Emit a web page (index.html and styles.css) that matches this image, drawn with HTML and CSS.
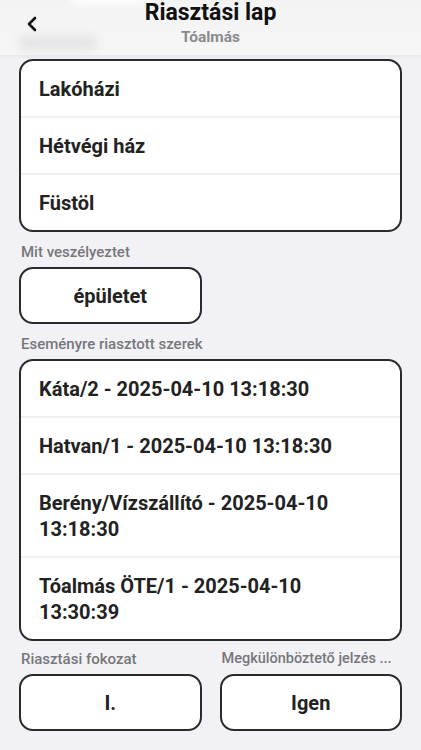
FILE: index.html
```html
<!DOCTYPE html>
<html lang="hu">

<head>
    <meta charset="UTF-8">
    <meta name="viewport" content="width=device-width, initial-scale=1.0">
    <title>Riasztási lap</title>
    <link rel="stylesheet" href="styles.css">
</head>

<body>
    <div class="header">
        <span class="blob blob-top"></span>
        <span class="blob blob-left"></span>
        <button class="back" aria-label="Vissza">
            <svg width="14" height="16" viewBox="0 0 14 16">
                <path d="M9 2 L3 8 L9 14" fill="none" stroke="#111" stroke-width="2.6" stroke-linecap="round" stroke-linejoin="round" />
            </svg>
        </button>
        <h1>Riasztási lap</h1>
        <p class="sub">Tóalmás</p>
    </div>

    <div class="content">
        <div class="card">
            <div class="row">Lakóházi</div>
            <div class="row">Hétvégi ház</div>
            <div class="row">Füstöl</div>
        </div>

        <p class="label">Mit veszélyeztet</p>
        <div class="pair">
            <div class="pill">épületet</div>
            <div></div>
        </div>

        <p class="label">Eseményre riasztott szerek</p>
        <div class="card">
            <div class="row">Káta/2 - 2025-04-10 13:18:30</div>
            <div class="row">Hatvan/1 - 2025-04-10 13:18:30</div>
            <div class="row">Berény/Vízszállító - 2025-04-10 13:18:30</div>
            <div class="row">Tóalmás ÖTE/1 - 2025-04-10 13:30:39</div>
        </div>

        <div class="pair labels">
            <p class="label">Riasztási fokozat</p>
            <p class="label">Megkülönböztető jelzés ...</p>
        </div>
        <div class="pair">
            <div class="pill">I.</div>
            <div class="pill">Igen</div>
        </div>
    </div>
</body>

</html>
```

FILE: styles.css
```css
body {
    margin: 0;
    background: #f2f2f6;
    font-family: Roboto, "Noto Sans", sans-serif;
    color: #222;
}

.header {
    position: relative;
    height: 55px;
    background: linear-gradient(#f3f3f4, #f6f6f7);
    box-shadow: 0 2px 4px rgba(0, 0, 0, 0.05);
    text-align: center;
    overflow: hidden;
}

.blob {
    position: absolute;
    filter: blur(5px);
    border-radius: 12px;
}

.blob-top {
    left: 70px;
    top: -14px;
    width: 80px;
    height: 18px;
    background: #fff;
}

.blob-left {
    left: 18px;
    top: 36px;
    width: 80px;
    height: 14px;
    background: #e4e4e6;
}

.back {
    position: absolute;
    left: 26px;
    top: 16px;
    padding: 0;
    border: 0;
    background: none;
}

h1 {
    position: relative;
    margin: 0;
    font-size: 23px;
    font-weight: 700;
    line-height: 26px;
    color: #111;
}

.sub {
    position: relative;
    margin: 2px 0 0;
    font-size: 15.5px;
    font-weight: 700;
    line-height: 18px;
    color: #8a8a8e;
}

.content {
    padding: 4px 19px 0;
}

.card {
    background: #fff;
    border: 2px solid #2a2a2a;
    border-radius: 14px;
    overflow: hidden;
}

.row {
    padding: 15px 18px 14px;
    font-size: 20px;
    font-weight: 700;
    line-height: 26px;
    border-bottom: 2px solid #f0f0f2;
}

.row:last-child {
    border-bottom: 0;
}

.label {
    margin: 12px 2px 7px;
    font-size: 15px;
    font-weight: 500;
    line-height: 16px;
    color: #77777b;
}

.pair {
    display: grid;
    grid-template-columns: 1fr 1fr;
    gap: 18px;
}

.labels .label {
    margin-top: 10px;
    white-space: nowrap;
}

.labels .label + .label {
    font-size: 14.5px;
}

.pill {
    height: 53px;
    background: #fff;
    border: 2px solid #2a2a2a;
    border-radius: 14px;
    display: flex;
    align-items: center;
    justify-content: center;
    font-size: 20px;
    font-weight: 700;
}
```
